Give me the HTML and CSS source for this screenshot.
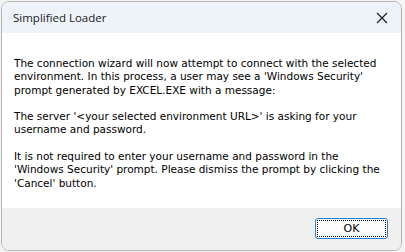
FILE: index.html
```html
<!DOCTYPE html>
<html>
<head>
<meta charset="utf-8">
<link rel="stylesheet" href="styles.css">
</head>
<body>
<div class="window">
  <div class="titlebar">
    <span class="title">Simplified Loader</span>
    <svg class="close" width="12" height="12" viewBox="0 0 12 12"><path d="M1 1 L11 11 M11 1 L1 11" stroke="#1a1a1a" stroke-width="1.1" fill="none"/></svg>
  </div>
  <div class="content">
    <p>The connection wizard will now attempt to connect with the selected<br>environment. In this process, a user may see a 'Windows Security'<br>prompt generated by EXCEL.EXE with a message:</p>
    <p>The server '&lt;your selected environment URL&gt;' is asking for your<br>username and password.</p>
    <p>It is not required to enter your username and password in the<br>'Windows Security' prompt. Please dismiss the prompt by clicking the<br>'Cancel' button.</p>
  </div>
  <div class="footer">
    <button class="ok"><span class="focus">OK</span></button>
  </div>
</div>
</body>
</html>
```
FILE: styles.css
```css
html, body { margin: 0; padding: 0; }
body {
  width: 405px;
  height: 252px;
  background: #f4f4f4;
  overflow: hidden;
}
.window {
  margin: 1px 0 0 1px;
  width: 399px;
  height: 248px;
  border: 1px solid #b4b4b4;
  border-radius: 8px;
  overflow: hidden;
  display: flex;
  flex-direction: column;
  background: #ffffff;
}
.titlebar {
  height: 31px;
  flex: none;
  background: #eef3f9;
  display: flex;
  align-items: center;
  justify-content: space-between;
  padding: 0 13px 0 11px;
}
.title {
  font-family: "Open Sans", "Noto Sans", sans-serif;
  font-size: 11.5px;
  color: #1a1a1a;
}
.close { display: block; margin-right: 0; }
.content {
  flex: 1;
  background: #fff;
  padding: 24px 0 0 12px;
  font-family: "DejaVu Sans", sans-serif;
  font-size: 10.5px;
  line-height: 13.3px;
  color: #000;
  white-space: nowrap;
}
.content p { margin: 0 0 13.3px 0; }
.footer {
  height: 42px;
  flex: none;
  background: #f0f0f0;
  display: flex;
  justify-content: flex-end;
  align-items: flex-start;
  padding: 10px 13px 0 0;
  box-sizing: border-box;
}
.ok {
  width: 73px;
  height: 21px;
  border: 1px solid #2a83d6;
  border-radius: 3px;
  background: #fdfdfd;
  padding: 1px;
  box-sizing: border-box;
  display: flex;
}
.focus {
  flex: 1;
  border: 1px dotted #000;
  display: flex;
  align-items: center;
  justify-content: center;
  font-family: "DejaVu Sans", sans-serif;
  font-size: 11px;
  color: #000;
}
```
